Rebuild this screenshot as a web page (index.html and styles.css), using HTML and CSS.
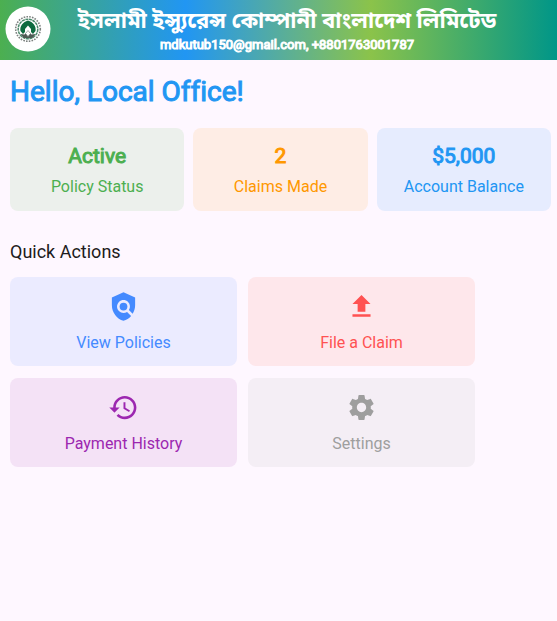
FILE: index.html
```html
<!DOCTYPE html>
<html lang="en">
<head>
<meta charset="utf-8">
<meta name="viewport" content="width=device-width, initial-scale=1">
<title>Dashboard</title>
<link rel="stylesheet" href="styles.css">
</head>
<body>
<header class="topbar">
  <svg class="logo" viewBox="0 0 46 46" aria-hidden="true">
    <circle cx="23" cy="23" r="22.5" fill="#fff"/>
    <circle cx="23" cy="23" r="12.3" fill="none" stroke="#7b817e" stroke-width="1.600" stroke-dasharray="1.6 1.200"/>
    <circle cx="23" cy="23" r="9.800" fill="none" stroke="#4c8a6c" stroke-width="1.500" stroke-dasharray="3 .6"/>
    <path d="M15.500 25c-1-5 2.500-9 7.500-10.500 5 1.500 8.500 5.500 7.500 10.500l-2.500 3-2-2v-3l-3-3.500-3 3.500v3l-2 2z" fill="#0d6b3f"/>
    <path d="M15.500 28l4 .5 3.500-3 3.500 3 4-.5-3 4h-9z" fill="#4e5a54"/>
    <path d="M23 24.500l2.500 3-2.500 3-2.500-3z" fill="#fff" stroke="#68746e" stroke-width=".6"/>
  </svg>
  <div class="company">
    <h1 class="company-name" lang="bn">ইসলামী ইন্স্যুরেন্স কোম্পানী বাংলাদেশ লিমিটেড</h1>
    <p class="contact">mdkutub150@gmail.com, +8801763001787</p>
  </div>
</header>
<main class="content">
  <h2 class="greeting">Hello, Local Office!</h2>
  <section class="stats" aria-label="Summary">
    <div class="card stat green"><strong class="value">Active</strong><span class="label">Policy Status</span></div>
    <div class="card stat orange"><strong class="value">2</strong><span class="label">Claims Made</span></div>
    <div class="card stat blue"><strong class="value">$5,000</strong><span class="label">Account Balance</span></div>
  </section>
  <h3 class="section-title">Quick Actions</h3>
  <div class="actions">
    <button class="card action view" type="button">
      <svg class="icon" viewBox="0 0 24 24" aria-hidden="true"><path d="M21 5l-9-4-9 4v6c0 5.550 3.840 10.740 9 12 2.300-.56 4.330-1.900 5.880-3.710l-3.120-3.120c-1.940 1.290-4.580 1.070-6.290-.64-1.950-1.950-1.950-5.120 0-7.070 1.950-1.950 5.120-1.950 7.070 0 1.710 1.710 1.920 4.350.64 6.290l2.900 2.900C20.290 15.690 21 13.380 21 11V5z"/><circle cx="12" cy="12" r="3"/></svg>
      <span class="label">View Policies</span>
    </button>
    <button class="card action claim" type="button">
      <svg class="icon" viewBox="0 0 24 24" aria-hidden="true"><path d="M5 20h14v-2H5v2zM5 10h4v6h6v-6h4l-7-7-7 7z"/></svg>
      <span class="label">File a Claim</span>
    </button>
    <button class="card action history" type="button">
      <svg class="icon" viewBox="0 0 24 24" aria-hidden="true"><path d="M13 3c-4.970 0-9 4.030-9 9H1l3.890 3.890.07.14L9 12H6c0-3.870 3.130-7 7-7s7 3.130 7 7-3.130 7-7 7c-1.930 0-3.680-.79-4.940-2.060l-1.420 1.420C8.270 19.990 10.510 21 13 21c4.970 0 9-4.030 9-9s-4.030-9-9-9zm-1 5v5l4.280 2.540.72-1.210-3.500-2.080V8H12z"/></svg>
      <span class="label">Payment History</span>
    </button>
    <button class="card action settings" type="button">
      <svg class="icon" viewBox="0 0 24 24" aria-hidden="true"><path d="M19.140 12.940c.04-.3.060-.61.060-.94 0-.32-.02-.64-.07-.94l2.030-1.580c.18-.14.230-.41.120-.61l-1.920-3.320c-.12-.22-.37-.29-.59-.22l-2.390.96c-.5-.38-1.030-.7-1.620-.94l-.36-2.540c-.04-.24-.24-.41-.48-.41h-3.840c-.24 0-.43.170-.47.410l-.36 2.540c-.59.240-1.130.57-1.620.94l-2.390-.96c-.22-.08-.47 0-.59.220L2.740 8.870c-.12.210-.08.470.12.610l2.030 1.580c-.05.3-.09.630-.09.940s.02.640.07.940l-2.030 1.580c-.18.140-.23.410-.12.610l1.920 3.320c.12.220.37.290.59.220l2.390-.96c.5.380 1.030.7 1.620.94l.36 2.540c.05.240.24.410.48.410h3.840c.24 0 .44-.17.470-.41l.36-2.540c.59-.24 1.130-.56 1.620-.94l2.390.96c.22.080.47 0 .59-.22l1.920-3.320c.12-.22.070-.47-.12-.61l-2.010-1.580zM12 15.600c-1.980 0-3.600-1.620-3.600-3.600s1.620-3.600 3.600-3.600 3.600 1.620 3.600 3.600-1.620 3.600-3.600 3.600z"/></svg>
      <span class="label">Settings</span>
    </button>
  </div>
</main>
</body>
</html>
```
FILE: styles.css
```css
* {
  box-sizing: border-box;
}

body {
  margin: 0;
  min-height: 100vh;
  background: #fef7ff;
  color: #1d1b20;
  font-family: Roboto, "Noto Sans Bengali", sans-serif;
}

h1, h2, h3, p {
  margin: 0;
}

.topbar {
  display: flex;
  align-items: center;
  min-height: 60px;
  padding: 0 8px 3px 5px;
  background: linear-gradient(90deg, #4caf50, #2196f3 33.3%, #8bc34a 66.6%, #009688);
  color: #fff;
}

.logo {
  flex: none;
  width: 46px;
  height: 46px;
}

.company {
  flex: 1;
  padding-right: 26px;
  text-align: center;
}

.company-name {
  font-size: 22px;
  font-weight: 700;
  line-height: 32px;
  white-space: nowrap;
}

.contact {
  font-size: 13px;
  font-weight: 400;
  line-height: 16px;
  -webkit-text-stroke: 1px currentColor;
}

.content {
  padding: 12px 6px 12px 10px;
}

.greeting {
  color: #2196f3;
  font-size: 28px;
  font-weight: 400;
  line-height: 40px;
  font-variant-ligatures: none;
  -webkit-text-stroke: 1px currentColor;
}

.stats {
  display: grid;
  grid-template-columns: repeat(3, 1fr);
  gap: 9px;
  margin-top: 16px;
}

.card {
  display: flex;
  flex-direction: column;
  align-items: center;
  border: 0;
  border-radius: 8px;
  font-family: inherit;
}

.stat {
  padding: 14px;
}

.value {
  font-size: 21px;
  font-weight: 400;
  line-height: 28px;
  -webkit-text-stroke: 1px currentColor;
}

.label {
  font-size: 16px;
  line-height: 20px;
}

.stat .label {
  margin-top: 7px;
}

.green {
  background: #ecf0ec;
  color: #4caf50;
}

.orange {
  background: #feede5;
  color: #ff9800;
}

.blue {
  background: #e6ecfe;
  color: #2196f3;
}

.section-title {
  margin-top: 29px;
  font-size: 18px;
  font-weight: 400;
  line-height: 24px;
}

.actions {
  display: grid;
  grid-template-columns: repeat(2, minmax(0, 227px));
  gap: 12px 11px;
  margin-top: 13px;
}

.action {
  gap: 11px;
  padding: 14px 8px 13px;
  cursor: pointer;
}

.icon {
  width: 31px;
  height: 31px;
  fill: currentColor;
}

.view {
  background: #ebebff;
  color: #448aff;
}

.claim {
  background: #fee7eb;
  color: #ff5252;
}

.history {
  background: #f4e2f6;
  color: #9c27b0;
}

.settings {
  background: #f4eef5;
  color: #9e9e9e;
}
```
